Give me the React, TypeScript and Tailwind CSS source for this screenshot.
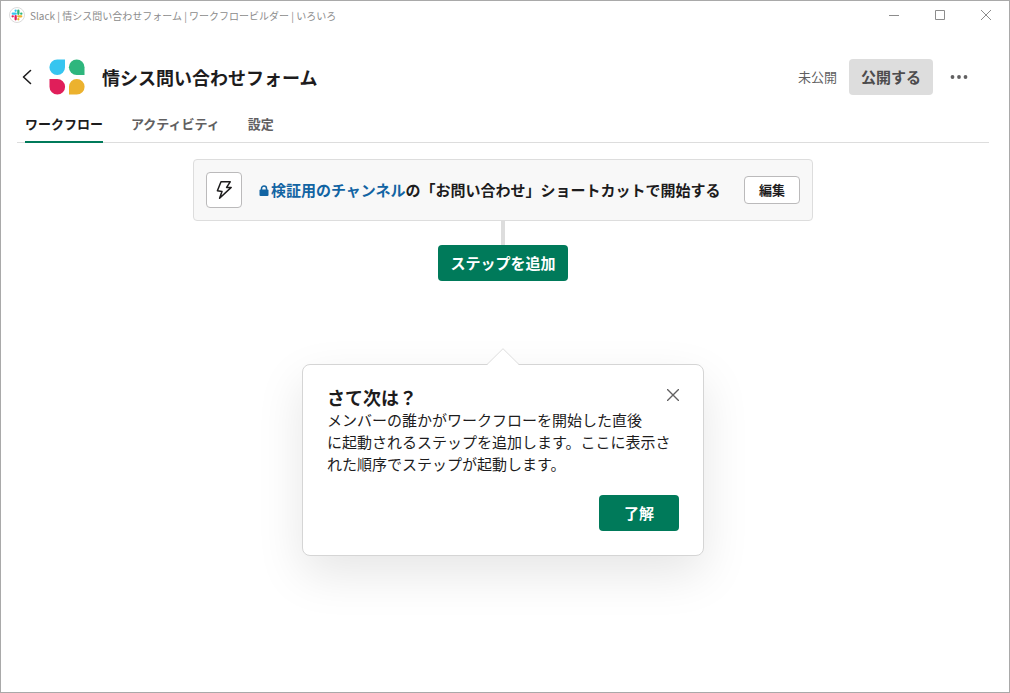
import { useState } from 'react';
import clsx from 'clsx';

const TABS = ['ワークフロー', 'アクティビティ', '設定'];

function SlackIcon() {
  return (
    <svg width="16" height="16" viewBox="0 0 32 32" aria-hidden="true">
      <circle cx="16" cy="16" r="15" fill="#fff" stroke="#dcdcdc" strokeWidth="2" />
      <g fill="none" strokeWidth="4.6" strokeLinecap="round">
        <path d="M7.5 13.3h6M13.3 7.3v.3" stroke="#36c5f0" />
        <path d="M18.7 7.5v6M24.7 13.3h-.3" stroke="#2eb67d" />
        <path d="M24.5 18.7h-6M18.7 24.7v-.3" stroke="#ecb22e" />
        <path d="M13.3 24.5v-6M7.3 18.7h.3" stroke="#e01e5a" />
      </g>
    </svg>
  );
}

function WorkflowLogo() {
  return (
    <svg width="36" height="36" viewBox="0 0 36 36" className="shrink-0" aria-hidden="true">
      <path d="M16 .5V8.2A7.8 7.8 0 1 1 8.2.5z" fill="#36c5f0" />
      <path d="M35.5 16H27.7A7.8 7.8 0 1 1 35.5 8.2z" fill="#2eb67d" />
      <path d="M.5 20H8.2A7.8 7.8 0 1 1 .5 27.8z" fill="#e01e5a" />
      <path d="M20 35.5V27.8A7.8 7.8 0 1 1 27.8 35.5z" fill="#ecb22e" />
    </svg>
  );
}

function WindowButton({ label, children }: { label: string; children: React.ReactNode }) {
  return (
    <button aria-label={label} className="flex h-7 w-[46px] items-center justify-center text-[#8c8c8c] hover:bg-gray-200">
      <svg width="10" height="10" viewBox="0 0 10 10" fill="none" stroke="currentColor">{children}</svg>
    </button>
  );
}

function TitleBar() {
  return (
    <div className="flex h-7 items-center pl-2">
      <SlackIcon />
      <span className="ml-[5px] min-w-0 flex-1 truncate text-[10px] text-[#8c8c8c]">
        Slack | 情シス問い合わせフォーム | ワークフロービルダー | いろいろ
      </span>
      <WindowButton label="最小化"><path d="M0 5.5h10" /></WindowButton>
      <WindowButton label="最大化"><path d="M.5.5h9v9h-9z" /></WindowButton>
      <WindowButton label="閉じる"><path d="M0 0l10 10M10 0L0 10" /></WindowButton>
    </div>
  );
}

function Header() {
  return (
    <header className="flex h-9 items-center pr-3">
      <button aria-label="戻る" className="flex w-5 shrink-0 justify-center">
        <svg width="10" height="16" viewBox="0 0 10 16" fill="none" stroke="#1d1c1d" strokeWidth="1.6" strokeLinecap="round" strokeLinejoin="round">
          <path d="M8.5 1.5L1.5 8l7 6.5" />
        </svg>
      </button>
      <div className="ml-3"><WorkflowLogo /></div>
      <h1 className="ml-[17px] min-w-0 truncate text-lg leading-6 font-bold">情シス問い合わせフォーム</h1>
      <div className="ml-auto flex items-center">
        <span className="text-[13px] whitespace-nowrap text-[#616061]">未公開</span>
        <button className="ml-3 h-9 rounded bg-[#dddddd] px-3 text-[15px] font-bold whitespace-nowrap text-[#4d4c4d]">公開する</button>
        <button aria-label="その他" className="ml-2 flex h-9 w-9 items-center justify-center">
          <svg width="18" height="4" viewBox="0 0 18 4" fill="#616061">
            <circle cx="2.5" cy="2" r="1.9" />
            <circle cx="9" cy="2" r="1.9" />
            <circle cx="15.5" cy="2" r="1.9" />
          </svg>
        </button>
      </div>
    </header>
  );
}

function TriggerCard() {
  return (
    <div className="flex w-full max-w-[620px] items-center rounded border border-[#dddddd] bg-[#f8f8f8] p-3">
      <div className="flex h-9 w-9 shrink-0 items-center justify-center rounded border border-[#bbbabb] bg-white">
        <svg width="16" height="20" viewBox="0 0 16 20" fill="none" stroke="#1d1c1d" strokeWidth="1.5" strokeLinejoin="round">
          <path d="M5 1.8H14.2L10.6 7.4H15.2L3.6 18.2L6 11.4L1.4 10.8z" />
        </svg>
      </div>
      <p className="ml-4 flex-1 pl-px text-[15px] font-bold">
        <a href="#channel" className="text-[#1264a3] hover:underline">
          <svg width="10" height="12" viewBox="0 0 10 12" className="mr-0.5 inline-block align-[-1px]" aria-hidden="true">
            <rect x=".5" y="4.5" width="9" height="6.5" rx="1" fill="currentColor" />
            <path d="M2.5 5V3.5a2.5 2.5 0 0 1 5 0V5" fill="none" stroke="currentColor" strokeWidth="1.5" />
          </svg>
          検証用のチャンネル
        </a>
        の「お問い合わせ」ショートカットで開始する
      </p>
      <button className="h-7 shrink-0 rounded border border-[#bbbabb] bg-white px-3.5 text-[13px] font-bold">編集</button>
    </div>
  );
}

function NextStepPopover({ onClose }: { onClose: () => void }) {
  return (
    <div className="mt-[67px] flex w-full max-w-[402px] flex-col items-center">
      <svg width="32" height="17" viewBox="0 0 32 17" className="z-10 -mb-px" aria-hidden="true">
        <path d="M0 17L16 .7 32 17z" fill="#fff" />
        <path d="M0 16.5L16 .7l16 15.8" fill="none" stroke="#dddddd" />
      </svg>
      <div role="dialog" aria-labelledby="next-title" className="w-full rounded-lg border border-[#d5d5d5] bg-white px-6 pt-5 pb-6 shadow-[0_18px_48px_rgba(0,0,0,0.1)]">
        <div className="flex items-start justify-between">
          <h2 id="next-title" className="text-lg leading-6 font-bold">さて次は？</h2>
          <button aria-label="閉じる" onClick={onClose} className="flex h-5 items-center">
            <svg width="12" height="12" viewBox="0 0 12 12" fill="none" stroke="#616061" strokeWidth="1.4" strokeLinecap="round">
              <path d="M.5.5l11 11M11.5.5l-11 11" />
            </svg>
          </button>
        </div>
        <p className="text-[15px] leading-[22px]">
          メンバーの誰かがワークフローを開始した直後
          <br />
          に起動されるステップを追加します。ここに表示された順序でステップが起動します。
        </p>
        <div className="mt-5 flex justify-end">
          <button onClick={onClose} className="h-9 w-20 rounded bg-[#007a5a] text-[15px] font-bold text-white">了解</button>
        </div>
      </div>
    </div>
  );
}

export default function App() {
  const [tab, setTab] = useState(0);
  const [showTip, setShowTip] = useState(true);

  return (
    <div className="min-h-screen border border-[#a9a9a9] bg-white font-['Noto_Sans_CJK_JP',sans-serif] text-[#1d1c1d]">
      <TitleBar />
      <div className="mt-[30px] pr-5 pl-4">
        <Header />

        {/* Tabs */}
        <nav className="mt-3 flex gap-7 border-b border-[#dddddd] px-2">
          {TABS.map((label, i) => (
            <button
              key={label}
              onClick={() => setTab(i)}
              className={clsx(
                '-mb-px h-9 border-b-2 text-[13px] font-bold',
                i === tab ? 'border-[#007a5a]' : 'border-transparent text-[#616061]',
              )}
            >
              {label}
            </button>
          ))}
        </nav>

        {/* Workflow steps */}
        <main className="flex flex-col items-center pt-4">
          <TriggerCard />
          <div className="h-6 w-1 bg-[#dddddd]" />
          <button className="h-9 rounded bg-[#007a5a] px-3 text-[15px] font-bold text-white">ステップを追加</button>
          {showTip && <NextStepPopover onClose={() => setShowTip(false)} />}
        </main>
      </div>
    </div>
  );
}
